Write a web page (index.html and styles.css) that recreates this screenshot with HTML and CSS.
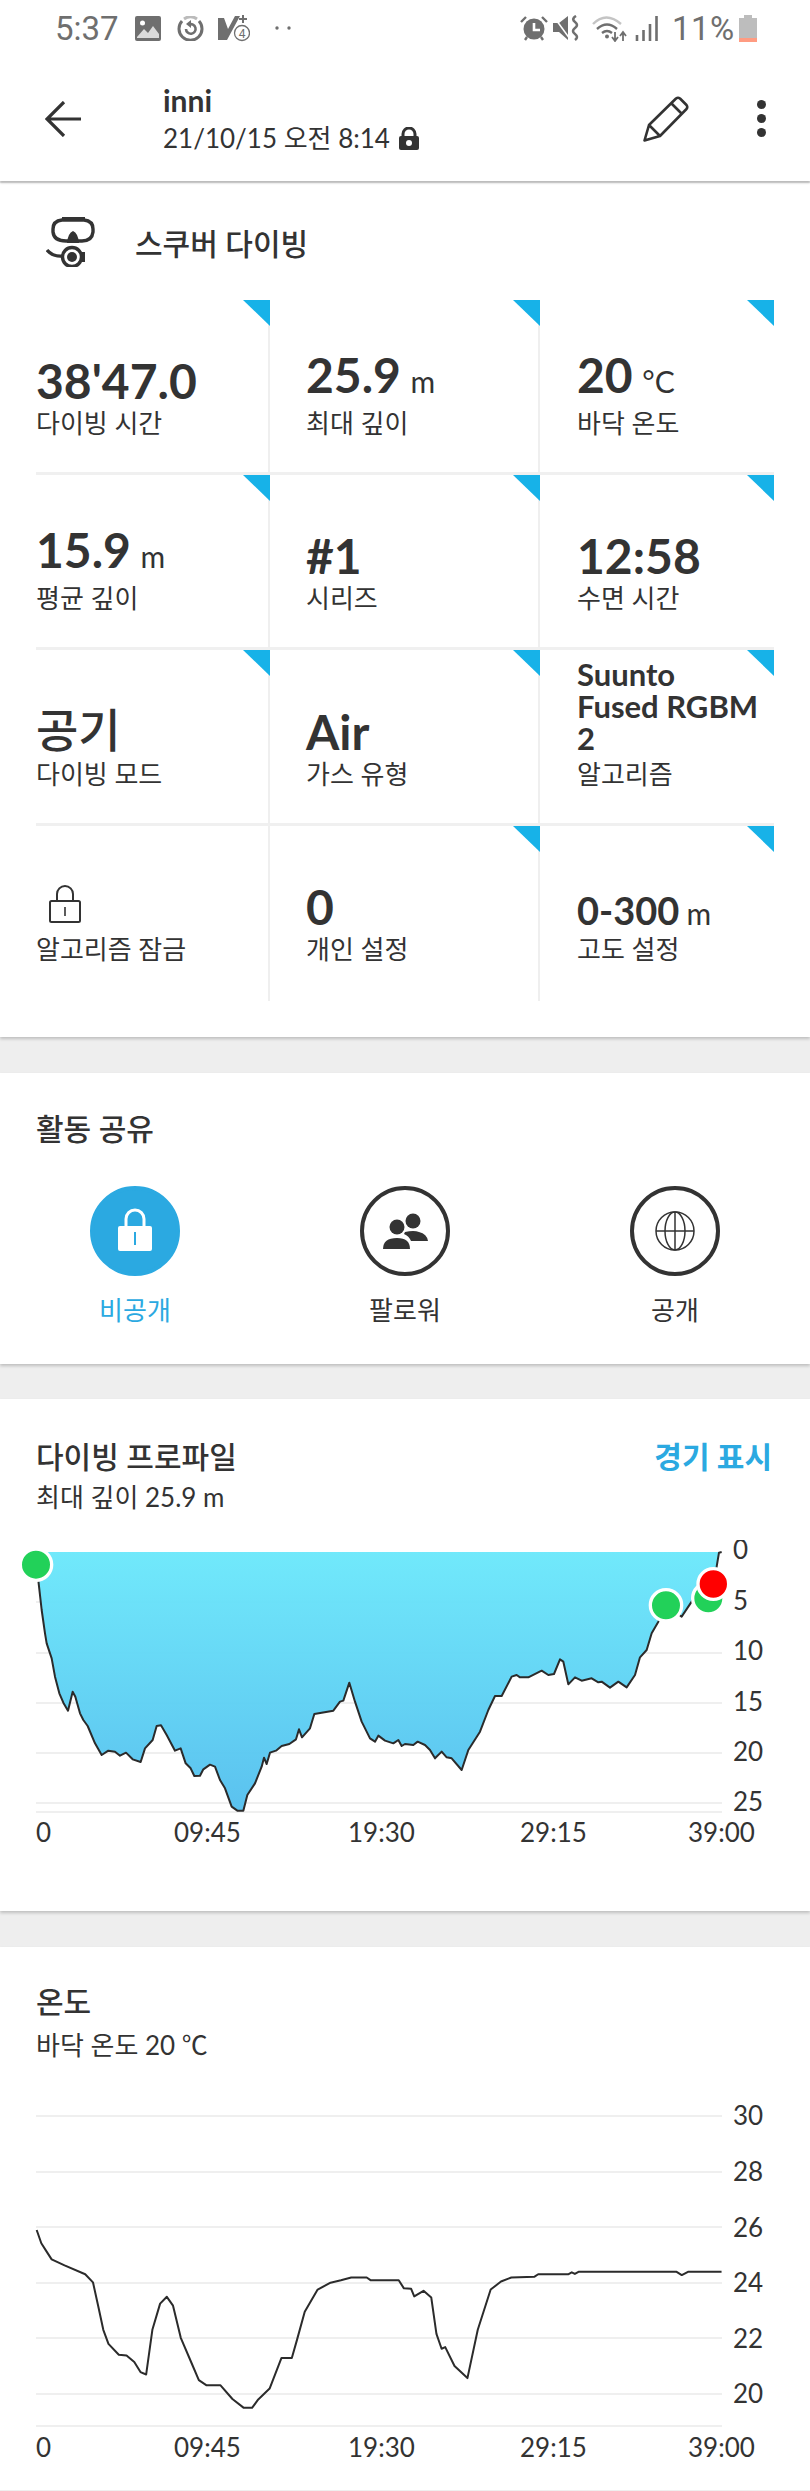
FILE: index.html
```html
<!DOCTYPE html>
<html>
<head>
  <meta charset="utf-8">
  <link rel="stylesheet" href="styles.css">
</head>
<body>
  <div class="topbar">
    <div class="status">
      <span class="clock">5:37</span>
      <svg class="st-photo" viewBox="0 0 26 25"><rect width="26" height="25" rx="2" fill="#6f6f6f"/><circle cx="7.500" cy="7" r="2.500" fill="#fff"/><path d="M2 21 L9 13 L13 17 L18 10 L24 18 V22 H2Z" fill="#fff" opacity=".75"/></svg>
      <svg class="st-sync" viewBox="0 0 27 25"><path d="M5 5 A11.500 11.500 0 1 0 22 5" fill="none" stroke="#6f6f6f" stroke-width="3"/><path d="M7 3 A11.500 11.500 0 0 1 20 3" fill="none" stroke="#bbb" stroke-width="3"/><path d="M9 13 A4.800 4.800 0 1 0 12 8.500" fill="none" stroke="#6f6f6f" stroke-width="2.600"/><path d="M14 4 V12 L9 8Z" fill="#6f6f6f"/></svg>
      <svg class="st-vpn" viewBox="0 0 32 27"><path d="M0 3 H6 L10 14 L17 1 H22 L9 25 H0Z" fill="#6f6f6f"/><path d="M25 0 V8 M21 4 H29" stroke="#6f6f6f" stroke-width="2"/><circle cx="24" cy="18" r="7.500" fill="#fff" stroke="#6f6f6f" stroke-width="1.300"/><text x="24" y="22.500" class="st-num">4</text></svg>
      <svg class="st-more" viewBox="0 0 16 4"><circle cx="2" cy="2" r="1.700" fill="#6f6f6f"/><circle cx="14" cy="2" r="1.700" fill="#6f6f6f"/></svg>
      <span class="st-space"></span>
      <svg class="st-alarm" viewBox="0 0 28 27"><circle cx="14" cy="14" r="10.500" fill="#6f6f6f"/><path d="M14 8 V15 H20" fill="none" stroke="#fff" stroke-width="2.600"/><path d="M1 7 L6 2 M27 7 L22 2 M5 25 L7 22 M23 25 L21 22" stroke="#6f6f6f" stroke-width="2.400"/></svg>
      <svg class="st-mute" viewBox="0 0 27 26"><path d="M0 8 H6 L15 1 V25 L6 17 H0Z" fill="#6f6f6f"/><path d="M1 2 L17 24" stroke="#fff" stroke-width="1.500"/><path d="M23 1 Q18 4 22 7 Q26 10 22 13 Q18 16 22 19 Q26 22 22 25" fill="none" stroke="#6f6f6f" stroke-width="2.600"/></svg>
      <svg class="st-wifi" viewBox="0 0 35 27"><path d="M1 9 Q14 -4 29 9" fill="none" stroke="#c4c4c4" stroke-width="2.400"/><path d="M5 14 Q15 5 25 14" fill="none" stroke="#6f6f6f" stroke-width="2.400"/><path d="M10 18 Q15 14 20 18" fill="none" stroke="#6f6f6f" stroke-width="2.400"/><circle cx="15" cy="21.500" r="2" fill="#6f6f6f"/><path d="M23 17 V25 M20 22 L23 26 L26 22 M31 26 V18 M28 21 L31 17 L34 21" fill="none" stroke="#6f6f6f" stroke-width="1.800"/></svg>
      <svg class="st-signal" viewBox="0 0 23 25"><path d="M2 19 V25 M8.500 14 V25 M15 8 V25 M21.500 0 V25" stroke="#6f6f6f" stroke-width="2.600"/></svg>
      <span class="pct">11%</span>
      <span class="battery"><span class="battery-cap"></span><span class="battery-body"><span class="battery-level"></span></span></span>
    </div>
    <div class="toolbar">
      <svg class="back" viewBox="0 0 36 36"><path d="M36 18 H3 M19 1 L2 18 L19 35" fill="none" stroke="#333" stroke-width="3.200"/></svg>
      <div class="who">
        <div class="who-name">inni</div>
        <div class="who-date">21/10/15 오전 8:14
          <svg class="small-lock" viewBox="0 0 22 23"><path d="M5 10 V7 A6 6 0 0 1 17 7 V10" fill="none" stroke="#333" stroke-width="3"/><rect x="1" y="9" width="20" height="14" rx="2" fill="#333"/><circle cx="11" cy="16" r="3" fill="#fff"/></svg>
        </div>
      </div>
      <svg class="pencil" viewBox="0 0 46 46"><path d="M1.500 44.500 L6 29 L33 2.500 Q35 1 37 2.500 L43.500 9 Q45 11 43.500 13 L17 40Z M6 29 L17 40 M28 7 L39 18" fill="none" stroke="#333" stroke-width="2.600" stroke-linejoin="round"/></svg>
      <div class="dots"><i></i><i></i><i></i></div>
    </div>
  </div>

  <section class="card card-stats">
    <div class="sport">
      <svg class="sport-icon" viewBox="0 0 50 50">
        <path d="M16 3 H38 Q47 4 47 12 V15 Q46 24 36 24 H20 Q8 24 7 15 V12 Q7 4 16 3Z" fill="none" stroke="#333" stroke-width="3.400"/>
        <path d="M16 0 H39 V4 H16Z M27 14 Q32 16 33 26 H21 Q22 16 27 14Z" fill="#333"/>
        <path d="M1 33 Q7 40 17 39" fill="none" stroke="#333" stroke-width="3.400"/>
        <rect x="33" y="35" width="6" height="10" fill="#333"/>
        <circle cx="26" cy="40" r="9.500" fill="#fff" stroke="#333" stroke-width="3.400"/>
        <circle cx="26" cy="40" r="5" fill="#333"/>
      </svg>
      <h2 class="sport-name">스쿠버 다이빙</h2>
    </div>
    <div class="stats">
      <div class="cell marked"><div class="value">38'47.0</div><div class="label">다이빙 시간</div></div>
      <div class="cell marked"><div class="value">25.9 <small>m</small></div><div class="label">최대 깊이</div></div>
      <div class="cell marked"><div class="value">20 <small>°C</small></div><div class="label">바닥 온도</div></div>

      <div class="cell marked"><div class="value">15.9 <small>m</small></div><div class="label">평균 깊이</div></div>
      <div class="cell marked"><div class="value">#1</div><div class="label">시리즈</div></div>
      <div class="cell marked"><div class="value">12:58</div><div class="label">수면 시간</div></div>

      <div class="cell marked"><div class="value value-kr">공기</div><div class="label">다이빙 모드</div></div>
      <div class="cell marked"><div class="value">Air</div><div class="label">가스 유형</div></div>
      <div class="cell marked"><div class="value value-long">Suunto<br>Fused RGBM<br>2</div><div class="label">알고리즘</div></div>

      <div class="cell">
        <svg class="algo-lock" viewBox="0 0 34 38"><path d="M9 16 V9 A8 8 0 0 1 25 9 V16" fill="none" stroke="#333" stroke-width="2"/><rect x="2" y="16" width="30" height="21" rx="1.500" fill="#fff" stroke="#333" stroke-width="2"/><path d="M17 22 V31" stroke="#333" stroke-width="1.600"/></svg>
        <div class="label">알고리즘 잠금</div>
      </div>
      <div class="cell marked"><div class="value">0</div><div class="label">개인 설정</div></div>
      <div class="cell marked"><div class="value value-mid">0-300 <small>m</small></div><div class="label">고도 설정</div></div>
    </div>
  </section>

  <section class="card card-share">
    <h3 class="card-title">활동 공유</h3>
    <div class="share-row">
      <div class="share share-on">
        <div class="share-circle">
          <svg class="share-lock" viewBox="0 0 34 43"><path d="M8 20 V11 A9 9 0 0 1 26 11 V20" fill="none" stroke="#fff" stroke-width="3"/><rect y="18" width="34" height="25" rx="2" fill="#fff"/><path d="M17 24 V37" stroke="#2ba9e1" stroke-width="2"/></svg>
        </div>
        <div class="share-name">비공개</div>
      </div>
      <div class="share">
        <div class="share-circle">
          <svg class="share-people" viewBox="0 0 46 36"><circle cx="31" cy="8" r="7.500" fill="#333"/><path d="M23 19 Q32 17 37 19 Q45 21 46 28 H29 Q27 23 22 21Z" fill="#333"/><circle cx="15" cy="14" r="7.500" fill="#333"/><path d="M1 36 Q1 25 15 25 Q28 25 28 36Z" fill="#333"/></svg>
        </div>
        <div class="share-name">팔로워</div>
      </div>
      <div class="share">
        <div class="share-circle">
          <svg class="share-globe" viewBox="0 0 40 40"><g fill="none" stroke="#333" stroke-width="1.500"><circle cx="20" cy="20" r="19"/><ellipse cx="20" cy="20" rx="10" ry="19"/><path d="M20 1 V39 M1 20 H39"/></g></svg>
        </div>
        <div class="share-name">공개</div>
      </div>
    </div>
  </section>

  <section class="card card-profile">
    <div class="title-row">
      <h3 class="card-title">다이빙 프로파일</h3>
      <a class="title-link">경기 표시</a>
    </div>
    <p class="card-sub">최대 깊이 25.9 m</p>
    <svg class="chart chart-depth" viewBox="0 1540 810 310">
      <defs>
        <linearGradient id="depthFill" x1="0" y1="0" x2="0" y2="1">
          <stop offset="0" stop-color="#6be8fb"/>
          <stop offset="1" stop-color="#54bfee"/>
        </linearGradient>
      </defs>
      <g class="grid">
        <line x1="36" x2="722" y1="1602" y2="1602"/>
        <line x1="36" x2="722" y1="1653" y2="1653"/>
        <line x1="36" x2="722" y1="1703" y2="1703"/>
        <line x1="36" x2="722" y1="1753" y2="1753"/>
        <line x1="36" x2="722" y1="1803" y2="1803"/>
        <line x1="36" x2="722" y1="1812" y2="1812"/>
      </g>
      <g transform="translate(0 1420) scale(.33333)">
        <polyline class="depth-line" points="108,396 116,490 125,570 135,640 140,670 155,715 165,770 178,820 190,848 204,872 218,815 226,830 240,880 250,900 263,918 285,970 305,1005 325,992 345,995 360,1007 378,998 398,1018 422,1026 435,985 458,960 470,918 483,916 500,945 525,992 542,985 557,1030 572,1045 583,1068 600,1067 610,1048 630,1034 645,1040 660,1080 675,1105 695,1160 712,1172 730,1172 742,1125 765,1090 785,1040 792,1013 800,1032 810,998 828,992 845,978 868,972 888,958 897,928 906,952 930,925 943,882 965,878 1000,872 1020,845 1030,842 1048,788 1065,845 1085,905 1110,955 1125,965 1135,947 1155,962 1180,970 1195,960 1205,978 1215,972 1240,975 1253,965 1275,975 1290,990 1305,1015 1325,995 1340,1012 1355,1015 1385,1050 1405,990 1440,935 1465,870 1485,828 1505,828 1535,770 1550,765 1560,772 1585,772 1625,752 1645,765 1662,762 1680,718 1690,725 1705,793 1725,772 1745,782 1775,775 1795,787 1805,785 1830,803 1855,785 1880,802 1905,765 1920,712 1940,690 1955,640 1975,605 2000,555 2045,590 2075,545 2095,520 2140,490 2150,440 2157,398 2165,396"/>
        <circle class="dot-start" cx="108" cy="434" r="47"/>
        <circle class="dot-start" cx="1998" cy="556" r="47"/>
        <circle class="dot-start" cx="2125" cy="535" r="47"/>
        <circle class="dot-end" cx="2140" cy="492" r="46"/>
      </g>
      <g class="axis">
        <text x="733" y="1559">0</text>
        <text x="733" y="1610">5</text>
        <text x="733" y="1660">10</text>
        <text x="733" y="1711">15</text>
        <text x="733" y="1761">20</text>
        <text x="733" y="1811">25</text>
        <text x="36" y="1842">0</text>
        <text x="174" y="1842">09:45</text>
        <text x="348" y="1842">19:30</text>
        <text x="520" y="1842">29:15</text>
        <text x="688" y="1842">39:00</text>
      </g>
    </svg>
  </section>

  <section class="card card-temp">
    <h3 class="card-title">온도</h3>
    <p class="card-sub">바닥 온도 20 ℃</p>
    <svg class="chart chart-temp" viewBox="0 2100 810 370">
      <g class="grid">
        <line x1="36" x2="722" y1="2117" y2="2117"/>
        <line x1="36" x2="722" y1="2173" y2="2173"/>
        <line x1="36" x2="722" y1="2228" y2="2228"/>
        <line x1="36" x2="722" y1="2284" y2="2284"/>
        <line x1="36" x2="722" y1="2339" y2="2339"/>
        <line x1="36" x2="722" y1="2395" y2="2395"/>
        <line x1="36" x2="722" y1="2427" y2="2427"/>
      </g>
      <g transform="translate(0 1860) scale(.5165 .4024)">
        <polyline class="temp-line" points="71,922 80,955 90,975 100,995 125,1010 165,1032 180,1052 190,1110 200,1170 210,1205 230,1232 245,1234 260,1250 272,1275 283,1281 295,1170 310,1105 323,1088 335,1110 350,1190 370,1250 385,1295 400,1308 427,1308 450,1342 472,1364 488,1364 500,1343 522,1316 545,1240 565,1240 575,1195 590,1125 615,1070 640,1053 660,1047 680,1040 710,1040 718,1047 772,1047 782,1067 796,1068 802,1087 820,1073 835,1090 845,1180 855,1217 862,1213 880,1260 905,1290 925,1170 950,1070 970,1050 990,1040 1035,1038 1042,1032 1100,1032 1107,1027 1113,1031 1120,1026 1310,1026 1320,1034 1332,1026 1397,1026"/>
      </g>
      <g class="axis">
        <text x="733" y="2126">30</text>
        <text x="733" y="2182">28</text>
        <text x="733" y="2238">26</text>
        <text x="733" y="2293">24</text>
        <text x="733" y="2349">22</text>
        <text x="733" y="2404">20</text>
        <text x="36" y="2458">0</text>
        <text x="174" y="2458">09:45</text>
        <text x="348" y="2458">19:30</text>
        <text x="520" y="2458">29:15</text>
        <text x="688" y="2458">39:00</text>
      </g>
    </svg>
  </section>
</body>
</html>
```

FILE: styles.css
```css
body {
  margin: 0;
  width: 810px;
  background-color: #eeeeee;
  color: #333;
  font-family: Lato, "Noto Sans CJK KR", sans-serif;
}

h2, h3, p {
  margin: 0;
}

/* top bars */
.topbar {
  position: relative;
  height: 181px;
  background: #fff;
  box-shadow: 0 2px 2px rgba(0, 0, 0, 0.22);
}

.status {
  display: flex;
  align-items: center;
  height: 56px;
  padding-left: 55px;
  color: #6f6f6f;
  font-family: Roboto, sans-serif;
  font-size: 33px;
}

.clock {
  width: 80px;
}

.st-photo { width: 26px; height: 25px; }
.st-sync { width: 27px; height: 25px; margin-left: 16px; }
.st-vpn { width: 32px; height: 27px; margin-left: 14px; }
.st-more { width: 16px; height: 4px; margin-left: 25px; }
.st-space { flex: 1; }
.st-alarm { width: 28px; height: 27px; }
.st-mute { width: 27px; height: 26px; margin-left: 5px; }
.st-wifi { width: 35px; height: 27px; margin-left: 12px; }
.st-signal { width: 23px; height: 25px; margin-left: 8px; }

.st-num {
  font-family: Roboto, sans-serif;
  font-size: 12px;
  text-anchor: middle;
  fill: #6f6f6f;
}

.pct {
  width: 67px;
  margin-left: 14px;
  letter-spacing: 0.5px;
}

.battery {
  display: flex;
  flex-direction: column;
  align-items: center;
  width: 18px;
  margin-right: 53px;
}

.battery-cap {
  width: 8px;
  height: 3px;
  background-color: #bdbdbd;
}

.battery-body {
  display: flex;
  align-items: flex-end;
  width: 18px;
  height: 24px;
  background-color: #bdbdbd;
}

.battery-level {
  width: 100%;
  height: 4px;
  background-color: #ff9c82;
}

.toolbar {
  display: flex;
  align-items: center;
  height: 125px;
  padding-left: 45px;
}

.back {
  width: 36px;
  height: 36px;
}

.who {
  flex: 1;
  margin-left: 82px;
}

.who-name {
  font-size: 30px;
  font-weight: 700;
  line-height: 36px;
}

.who-date {
  display: flex;
  align-items: center;
  gap: 8px;
  margin-top: 3px;
  font-size: 26px;
  line-height: 34px;
}

.small-lock {
  width: 22px;
  height: 23px;
}

.pencil {
  width: 46px;
  height: 46px;
}

.dots {
  display: flex;
  flex-direction: column;
  gap: 5px;
  margin: 0 44px 0 68px;
}

.dots i {
  width: 9px;
  height: 9px;
  border-radius: 50%;
  background-color: #333;
}

/* cards */
.card {
  background: #fff;
  box-shadow: 0 2px 3px rgba(0, 0, 0, 0.2);
}

.card-title {
  font-size: 30px;
  font-weight: 500;
  line-height: 40px;
}

.card-sub {
  font-size: 26px;
  line-height: 34px;
}

/* stats card */
.card-stats {
  height: 854px;
  margin-top: 2px;
  padding: 0 36px;
  box-sizing: border-box;
}

.sport {
  display: flex;
  align-items: center;
  height: 117px;
  padding-left: 10px;
}

.sport-icon {
  width: 50px;
  height: 50px;
}

.sport-name {
  margin-left: 39px;
  font-size: 30px;
  font-weight: 500;
}

.stats {
  display: grid;
  grid-template-columns: 234px 270px 234px;
  grid-template-rows: 175px 175px 176px 175px;
}

.cell {
  position: relative;
  display: flex;
  flex-direction: column;
  justify-content: flex-end;
  box-sizing: border-box;
  padding: 0 0 32px 36px;
  border-right: 2px solid #efefef;
  border-bottom: 3px solid #f0f0f0;
}

.cell:nth-child(3n+1) {
  padding-left: 0;
}

.cell:nth-child(3n) {
  padding-left: 37px;
  border-right: none;
}

.cell:nth-last-child(-n+3) {
  padding-bottom: 35px;
  border-bottom: none;
}

.marked::after {
  content: "";
  position: absolute;
  top: 0;
  right: -2px;
  width: 27px;
  height: 26px;
  background-color: #17b2e8;
  clip-path: polygon(0 0, 100% 0, 100% 100%);
}

.cell:nth-child(3n)::after {
  right: 0;
}

.value {
  margin-bottom: 1px;
  font-size: 48px;
  font-weight: 700;
  line-height: 48px;
  white-space: nowrap;
}

.value small {
  margin-left: -2px;
  font-size: 30px;
  font-weight: 400;
}

.value-kr {
  margin-bottom: 3px;
  font-size: 46px;
  font-weight: 500;
}

.value-long {
  margin-bottom: 3px;
  font-size: 31px;
  line-height: 32px;
}

.value-mid {
  margin-bottom: -5px;
  font-size: 38px;
}

.label {
  font-size: 26px;
  line-height: 34px;
}

.algo-lock {
  width: 34px;
  height: 38px;
  margin: 0 0 9px 12px;
}

/* sharing card */
.card-share {
  height: 291px;
  margin-top: 36px;
  padding-top: 35px;
  box-sizing: border-box;
}

.card-share .card-title {
  padding-left: 36px;
}

.share-row {
  display: grid;
  grid-template-columns: repeat(3, 270px);
  margin-top: 38px;
}

.share {
  display: flex;
  flex-direction: column;
  align-items: center;
}

.share-circle {
  display: flex;
  align-items: center;
  justify-content: center;
  width: 90px;
  height: 90px;
  box-sizing: border-box;
  border: 4px solid #333;
  border-radius: 50%;
}

.share-on .share-circle {
  background-color: #2ba9e1;
  border-color: #2ba9e1;
}

.share-name {
  margin-top: 17px;
  font-size: 26px;
  line-height: 34px;
}

.share-on .share-name {
  color: #2ba9e1;
}

.share-lock { width: 34px; height: 43px; margin-top: -4px; }
.share-people { width: 46px; height: 36px; }
.share-globe { width: 40px; height: 40px; }

/* chart cards */
.card-profile {
  height: 512px;
  margin-top: 35px;
  padding: 37px 0 0 36px;
  box-sizing: border-box;
}

.card-profile .card-sub {
  margin-top: 4px;
}

.title-row {
  display: flex;
  justify-content: space-between;
  padding-right: 38px;
}

.title-link {
  color: #2ba9e1;
  font-size: 30px;
  font-weight: 700;
  line-height: 40px;
}

.chart {
  display: block;
  width: 810px;
  margin-left: -36px;
}

.chart-depth {
  height: 310px;
  margin-top: 26px;
}

.chart-temp {
  height: 370px;
  margin-top: 37px;
}

.grid line {
  stroke: #efefef;
  stroke-width: 2;
}

.axis text {
  fill: #333;
  font-size: 26px;
}

.depth-line {
  fill: url(#depthFill);
  fill-opacity: 0.96;
  stroke: #2b2b2b;
  stroke-width: 6;
  stroke-linejoin: round;
}

.dot-start,
.dot-end {
  stroke: #fff;
  stroke-width: 10;
}

.dot-start { fill: #22d159; }
.dot-end { fill: #ff0000; }

.temp-line {
  fill: none;
  stroke: #2b2b2b;
  stroke-width: 2;
  stroke-linejoin: round;
  vector-effect: non-scaling-stroke;
}

.card-temp {
  height: 543px;
  margin-top: 36px;
  padding: 34px 0 0 36px;
  box-sizing: border-box;
}

.card-temp .card-sub {
  margin-top: 7px;
}
```
